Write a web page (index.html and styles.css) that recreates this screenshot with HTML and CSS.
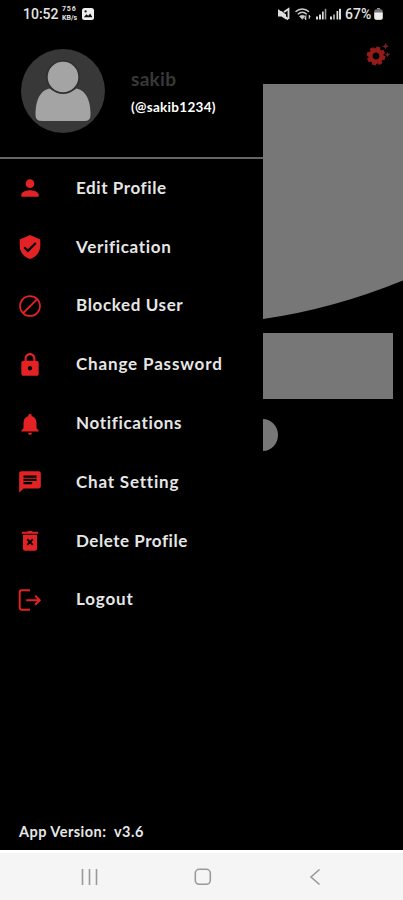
FILE: index.html
```html
<!DOCTYPE html>
<html lang="en">
<head>
  <meta charset="UTF-8">
  <meta name="viewport" content="width=device-width, initial-scale=1.0">
  <title>Profile Menu</title>
  <link rel="stylesheet" href="styles.css">
</head>
<body>
  <div class="status-bar">
    <span class="time">10:52</span>
    <span class="net-speed"><span class="speed">756</span><span>KB/s</span></span>
    <svg class="picture" viewBox="0 0 12 12"><rect width="12" height="12" rx="2.5" fill="#eee"/><path d="M1.8 9.2l2.6-3 1.8 1.6 2-2.3 2.2 3.7z" fill="#111"/><circle cx="3.6" cy="3.4" r="1.1" fill="#111"/></svg>
    <svg class="signals" viewBox="0 0 66 14">
      <path d="M0 4h3.500L8 7.500v5L3.500 9.500H0z" fill="#ddd"/>
      <path d="M0 3l10 9.500M6 5l4.500-3v10" stroke="#ddd" stroke-width="1.800" fill="none"/>
      <path d="M17.500 4.800c4-3.700 9.500-3.700 13.500 0M19.800 7.300c2.700-2.400 6.300-2.400 9 0" stroke="#ccc" stroke-width="1.500" fill="none"/>
      <path d="M21.500 9.300c1.700-1.400 4-1.400 5.600 0l-2.800 3zM28 8v5l-1.500-1.500M31 12V8l1.500 1.500" fill="#ccc" stroke="#ccc" stroke-width=".6"/>
      <g fill="#ddd">
        <rect x="38" y="9.500" width="2" height="3"/><rect x="41" y="7.500" width="2" height="5"/><rect x="44" y="4.500" width="1.700" height="8"/><rect x="46.700" y="1.800" width="1.600" height="10.700" fill="#999"/>
        <rect x="52" y="9.500" width="2" height="3"/><rect x="55" y="7.500" width="2" height="5" fill="#999"/><rect x="58.500" y="4" width="1.700" height="8.500"/><rect x="61" y="1.800" width="2" height="10.700"/>
      </g>
    </svg>
    <span class="percent">67%</span>
    <svg class="battery" viewBox="0 0 9 12"><path d="M3 0h3v1.300H3z" fill="#999"/><rect x=".3" y="1.200" width="8.400" height="10.600" rx="2" fill="#777"/><path d="M.3 4.500h8.400V10q0 1.800-2 1.800H2.300q-2 0-2-1.800z" fill="#eee"/></svg>
  </div>

  <div class="screen">
    <div class="drawer">
      <div class="profile">
        <svg class="avatar" viewBox="0 0 84 84">
          <circle cx="42" cy="42" r="42" fill="#383838"/>
          <path d="M28.500 39.500q-13 3-14 23.500v3q0 6 6.500 6h42.500q6 0 6-6v-3q-1-20.500-14-23.500-13.500 9-27 0z" fill="#a4a4a4"/>
          <circle cx="42" cy="28" r="16.200" fill="#a4a4a4" stroke="#303030" stroke-width="1.800"/>
        </svg>
        <div class="names">
          <div class="name">sakib</div>
          <div class="handle">(@sakib1234)</div>
        </div>
      </div>

      <div class="menu">
        <div class="item">
          <svg viewBox="0 0 24 24"><path d="M12 12c2.210 0 4-1.790 4-4s-1.790-4-4-4-4 1.790-4 4 1.790 4 4 4zm0 2c-2.670 0-8 1.340-8 4v2h16v-2c0-2.660-5.330-4-8-4z"/></svg>
          <span class="edit">Edit Profile</span>
        </div>
        <div class="item">
          <svg viewBox="0 0 24 24"><path d="M12 1L2.500 5v6c0 5.550 4.100 10.740 9.500 12 5.400-1.260 9.500-6.450 9.500-12V5L12 1zm-2 16l-4-4 1.410-1.410L10 14.170l6.590-6.590L18 9l-8 8z"/></svg>
          <span class="verify">Verification</span>
        </div>
        <div class="item">
          <svg viewBox="0 0 24 24"><path d="M12 2a10 10 0 1 0 0 20 10 10 0 1 0 0-20zm0 1.700a8.300 8.300 0 0 1 5.400 2L5.700 17.400A8.300 8.300 0 0 1 12 3.700zm0 16.600a8.300 8.300 0 0 1-5.100-1.700L18.600 6.900A8.300 8.300 0 0 1 12 20.300z"/></svg>
          <span class="blocked">Blocked User</span>
        </div>
        <div class="item">
          <svg viewBox="0 0 24 24"><path d="M18 8h-1V6c0-2.760-2.240-5-5-5S7 3.240 7 6v2H6c-1.100 0-2 .9-2 2v10c0 1.100.9 2 2 2h12c1.100 0 2-.9 2-2V10c0-1.100-.9-2-2-2zm-6 9c-1.100 0-2-.9-2-2s.9-2 2-2 2 .9 2 2-.9 2-2 2zm3.100-9H8.900V6c0-1.710 1.390-3.100 3.100-3.100s3.100 1.390 3.100 3.100v2z"/></svg>
          <span class="password">Change Password</span>
        </div>
        <div class="item">
          <svg viewBox="0 0 24 24"><path d="M12 22c1.100 0 1.800-.8 1.800-2h-3.600c0 1.200.7 2 1.800 2zm6-6v-5c0-3.070-1.640-5.640-4.500-6.320V4a1.500 1.500 0 0 0-3 0v.680C7.640 5.360 6 7.920 6 11v5l-2 2v1h16v-1l-2-2z"/></svg>
          <span class="bell">Notifications</span>
        </div>
        <div class="item">
          <svg viewBox="0 0 24 24"><path d="M20 2H4c-1.100 0-1.990.9-1.990 2L2 22l4-4h14c1.100 0 2-.9 2-2V4c0-1.100-.9-2-2-2zM6 9h12v2H6V9zm8 5H6v-2h8v2zm4-6H6V6h12v2z"/></svg>
          <span class="chat">Chat Setting</span>
        </div>
        <div class="item">
          <svg viewBox="0 0 24 24"><path d="M4.500 3.500h5l.8-.8h3.400l.8.800h5v1.700h-15zM5.500 6.300h13V19c0 1.200-.8 2-2 2h-9c-1.200 0-2-.8-2-2zM8.800 11.100l1.300-1.300 1.900 1.900 1.900-1.900 1.300 1.300-1.900 1.900 1.900 1.900-1.300 1.300-1.900-1.900-1.900 1.900-1.300-1.300 1.900-1.900z" fill-rule="evenodd"/></svg>
          <span class="delete">Delete Profile</span>
        </div>
        <div class="item">
          <svg class="line" viewBox="0 0 24 24"><path d="M12 3H4.500Q2.500 3 2.500 5v14q0 2 2 2H12M8.500 12.200h12.500M16.800 8l4.200 4.200-4.200 4.200"/></svg>
          <span class="logout">Logout</span>
        </div>
      </div>

      <div class="version">App Version:&nbsp; v3.6</div>
    </div>

    <!-- page behind the drawer -->
    <div class="page">
      <svg class="gear" viewBox="0 0 24 24">
        <g transform="translate(10 13)">
          <circle r="5.700" fill="none" stroke="#951b1b" stroke-width="4.400"/>
          <circle r="8.100" fill="none" stroke="#951b1b" stroke-width="2.600" stroke-dasharray="3.900 2.460"/>
        </g>
        <path d="M19.500 0l1 2.300 2.300 1-2.300 1-1 2.300-1-2.300-2.300-1 2.300-1zM21.500 9l.8 1.800 1.800.8-1.800.8-.8 1.800-.8-1.800-1.800-.8 1.800-.8z" fill="#74202b"/>
      </svg>
      <svg class="curve" viewBox="0 0 140 236"><path d="M0 0h140v196.500Q70 225 0 235z" fill="#777"/></svg>
      <div class="card"></div>
      <div class="dot"></div>
    </div>
  </div>

  <div class="nav-bar">
    <svg viewBox="0 0 20 20"><path d="M2.500 2v16M9.500 2v16M16.500 2v16"/></svg>
    <svg viewBox="0 0 20 20"><rect x="2.300" y="2.300" width="15" height="15" rx="4"/></svg>
    <svg viewBox="0 0 20 20"><path d="M14.500 2.500l-8.500 7.500 8.500 7.500"/></svg>
  </div>
</body>
</html>
```
FILE: styles.css
```css
body {
  margin: 0;
  width: 403px;
  height: 900px;
  display: flex;
  flex-direction: column;
  overflow: hidden;
  background-color: #000;
  color: #e6e6e6;
  font-family: Lato, sans-serif;
}

svg {
  display: block;
  flex: none;
}

.status-bar {
  display: flex;
  align-items: center;
  height: 28px;
  padding: 0 20px 0 23px;
  box-sizing: border-box;
  font-family: Roboto, sans-serif;
  font-size: 14px;
  font-weight: 500;
  color: #e4e4e4;
}

.time {
  width: 39px;
}

.net-speed {
  display: flex;
  flex-direction: column;
  width: 20px;
  font-size: 7px;
  line-height: 9px;
  font-weight: 700;
}

.speed {
  letter-spacing: 0.8px;
}

.picture {
  width: 12px;
  height: 12px;
}

.signals {
  width: 66px;
  height: 14px;
  margin-left: auto;
}

.percent {
  width: 27px;
  margin-left: 1px;
  margin-right: 2px;
}

.battery {
  width: 9px;
  height: 12px;
}

.screen {
  display: grid;
  grid-template-columns: 263px 140px;
  height: 822px;
}

.drawer {
  display: flex;
  flex-direction: column;
}

.profile {
  display: flex;
  height: 129px;
  padding: 21px 0 0 21px;
  box-sizing: border-box;
}

.avatar {
  width: 84px;
  height: 84px;
}

.names {
  margin: 18px 0 0 26px;
}

.name {
  font-size: 19px;
  line-height: 24px;
  font-weight: 700;
  letter-spacing: 0.3px;
  color: #383838;
}

.handle {
  margin-top: 7px;
  font-size: 13.5px;
  line-height: 18px;
  font-weight: 700;
  letter-spacing: 0.3px;
  color: #fff;
}

.menu {
  border-top: 2px solid #656565;
}

.item {
  display: flex;
  align-items: center;
  height: 58.8px;
  padding-left: 17px;
  font-size: 17px;
  font-weight: 700;
}

.item span {
  padding-bottom: 2px;
}

.item svg {
  width: 26px;
  height: 26px;
  margin-right: 33px;
  fill: #e32224;
}

.item .line {
  fill: none;
  stroke: #e32224;
  stroke-width: 1.8;
}

.edit {
  letter-spacing: 0.58px;
}

.verify {
  letter-spacing: 0.68px;
}

.blocked {
  letter-spacing: 0.62px;
}

.password {
  letter-spacing: 0.85px;
}

.bell {
  letter-spacing: 0.66px;
}

.chat {
  letter-spacing: 0.8px;
}

.delete {
  letter-spacing: 0.53px;
}

.logout {
  letter-spacing: 0.85px;
}

.version {
  margin: auto 0 8px 19px;
  font-size: 14.5px;
  line-height: 20px;
  font-weight: 700;
  letter-spacing: 0.46px;
}

.page {
  display: flex;
  flex-direction: column;
}

.gear {
  width: 24px;
  height: 24px;
  margin: 15px 0 17px 103px;
}

.curve {
  width: 140px;
  height: 236px;
}

.card {
  width: 130px;
  height: 66px;
  margin-top: 13px;
  background-color: #777;
}

.dot {
  width: 15px;
  height: 32px;
  margin-top: 20px;
  border-radius: 0 15px 15px 0 / 0 16px 16px 0;
  background-color: #777;
}

.nav-bar {
  display: flex;
  justify-content: space-between;
  align-items: center;
  height: 50px;
  padding: 0 78px 0 80px;
  box-sizing: border-box;
  border-top: 3px solid #fff;
  background-color: #f5f5f5;
}

.nav-bar svg {
  width: 20px;
  height: 20px;
  fill: none;
  stroke: #999;
  stroke-width: 1.6;
}
```
